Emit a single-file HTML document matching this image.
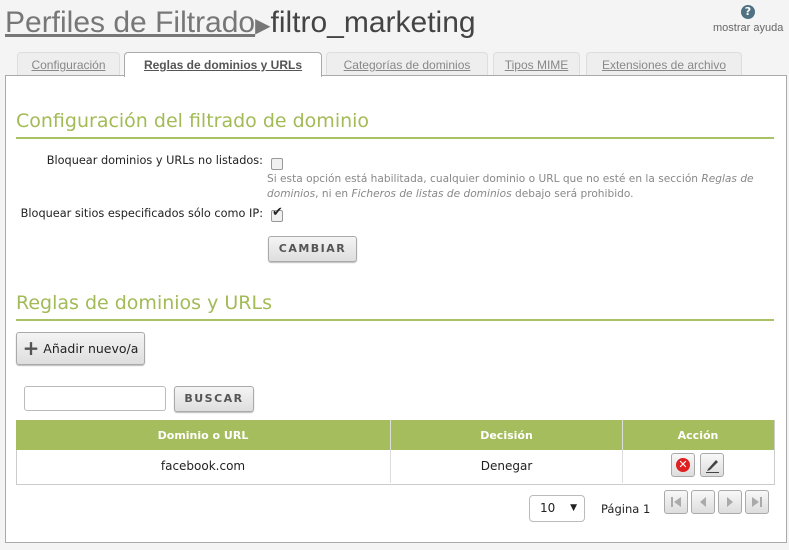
<!DOCTYPE html>
<html><head><meta charset="utf-8"><style>
body{margin:0;width:789px;height:550px;background:#f4f4f4;font-family:"DejaVu Sans",Verdana,sans-serif;position:relative;overflow:hidden;color:#222}
.a{position:absolute}
.title{left:5px;top:6px;font-family:"Liberation Sans",sans-serif;font-size:30px;color:#777;white-space:nowrap;transform:scaleX(1.0);transform-origin:left top}
.title u{color:#777}
.title b{color:#444;font-weight:normal}
.tab{top:52px;height:22px;border:1px solid #ddd;border-bottom:none;border-radius:4px 4px 0 0;background:#eeeeee;font-family:"Liberation Sans",sans-serif;font-size:12px;color:#888;text-align:center;line-height:24px;white-space:nowrap}
.tab span{text-decoration:underline}
.panel{left:5px;top:75px;width:780px;height:466px;background:#fff;border:1px solid #aaa}
.h{color:#a2bb57;font-size:19px;left:16px}
.line{left:16px;width:758px;height:2px;background:#a9c265}
.lbl{font-size:11.3px;text-align:right;white-space:nowrap}
.btn{background:linear-gradient(#f4f4f4,#dedede);border:1px solid #aaa;border-radius:3px;box-shadow:0 1px 1px #bbb;font-size:11px;font-weight:bold;letter-spacing:1.5px;color:#555;text-align:center}
.cb{width:10px;height:10px;border:1px solid #999;border-radius:2px;background:#f0f0f0}
.sm{width:22px;height:22px;border:1px solid #aaa;border-radius:3px;background:linear-gradient(#f8f8f8,#ddd)}
</style></head><body>
<div class="a title"><u>Perfiles de Filtrado</u><span style="color:#777;font-size:20px">▶</span><b>filtro_marketing</b></div>
<div class="a" style="left:741px;top:5px;width:14px;height:14px;border-radius:50%;background:#4f7184;color:#fff;font-size:11px;font-weight:bold;text-align:center;line-height:14px">?</div>
<div class="a" style="left:713px;top:22px;font-family:'Liberation Sans',sans-serif;font-size:11px;color:#666">mostrar ayuda</div>
<div class="a panel"></div>
<div class="a tab" style="left:17px;width:101px"><span>Configuración</span></div>
<div class="a tab" style="left:124px;width:196px;height:24px;background:#fff;border-color:#aaa;color:#555;font-weight:bold"><span>Reglas de dominios y URLs</span></div>
<div class="a tab" style="left:326px;width:160px"><span>Categorías de dominios</span></div>
<div class="a tab" style="left:493px;width:85px"><span>Tipos MIME</span></div>
<div class="a tab" style="left:586px;width:154px"><span>Extensiones de archivo</span></div>

<div class="a h" style="top:110px">Configuración del filtrado de dominio</div>
<div class="a line" style="top:137px"></div>
<div class="a lbl" style="left:20px;width:243px;top:154px">Bloquear dominios y URLs no listados:</div>
<div class="a cb" style="left:271px;top:158px"></div>
<div class="a" style="left:267px;top:172px;width:510px;font-size:10.6px;color:#888;line-height:15px">Si esta opción está habilitada, cualquier dominio o URL que no esté en la sección <i>Reglas de dominios</i>, ni en <i>Ficheros de listas de dominios</i> debajo será prohibido.</div>
<div class="a lbl" style="left:0px;width:263px;top:207px">Bloquear sitios especificados sólo como IP:</div>
<div class="a cb" style="left:271px;top:210px"></div>
<div class="a" style="left:272px;top:205px;font-size:13px;color:#222">✔</div>
<div class="a btn" style="left:268px;top:236px;width:87px;height:24px;line-height:24px">CAMBIAR</div>

<div class="a h" style="top:292px">Reglas de dominios y URLs</div>
<div class="a line" style="top:319px"></div>
<div class="a btn" style="left:16px;top:332px;width:127px;height:31px;line-height:31px;font-weight:normal;letter-spacing:0;font-size:12.5px;color:#222"><span style="font-size:20px;color:#555;vertical-align:-2px;font-weight:bold">+</span> Añadir nuevo/a</div>
<div class="a" style="left:24px;top:386px;width:140px;height:23px;border:1px solid #bbb;border-radius:3px;background:#fff"></div>
<div class="a btn" style="left:174px;top:386px;width:78px;height:24px;line-height:24px">BUSCAR</div>

<div class="a" style="left:16px;top:420px;width:757px;height:63px;border:1px solid #ccc;background:#fff"></div>
<div class="a" style="left:16px;top:420px;width:758px;height:30px;background:#a5bd5c"></div>
<div class="a" style="left:390px;top:420px;width:1px;height:63px;background:#ddd"></div>
<div class="a" style="left:622px;top:420px;width:1px;height:63px;background:#ddd"></div>
<div class="a" style="left:16px;top:429px;width:374px;text-align:center;color:#fff;font-weight:bold;font-size:11px">Dominio o URL</div>
<div class="a" style="left:391px;top:429px;width:231px;text-align:center;color:#fff;font-weight:bold;font-size:11px">Decisión</div>
<div class="a" style="left:623px;top:429px;width:150px;text-align:center;color:#fff;font-weight:bold;font-size:11px">Acción</div>
<div class="a" style="left:16px;top:459px;width:374px;text-align:center;font-size:12px">facebook.com</div>
<div class="a" style="left:391px;top:459px;width:231px;text-align:center;font-size:12px">Denegar</div>
<div class="a sm" style="left:671px;top:453px"><div class="a" style="left:4px;top:4px;width:14px;height:14px;border-radius:50%;background:#e02020;color:#fff;font-size:11px;font-weight:bold;text-align:center;line-height:14px">✕</div></div>
<div class="a sm" style="left:700px;top:453px"><svg class="a" style="left:3px;top:3px" width="16" height="16"><path d="M4 12 L12 3 L14 5 L6 13 L3 14Z" fill="#444"/><rect x="2" y="15" width="13" height="1" fill="#444"/></svg></div>

<div class="a" style="left:529px;top:495px;width:54px;height:25px;border:1px solid #bbb;border-radius:4px;background:#fff;font-size:12px;line-height:25px"><span style="margin-left:10px">10</span><span style="position:absolute;right:7px;font-size:9px">▼</span></div>
<div class="a" style="left:601px;top:502px;font-size:11.5px">Página 1</div>
<div class="a sm" style="left:664px;top:490px"><svg class="a" style="left:5px;top:5px" width="12" height="12"><rect x="1" y="1" width="2" height="10" fill="#aaa"/><path d="M11 1 L4 6 L11 11Z" fill="#aaa"/></svg></div>
<div class="a sm" style="left:691px;top:490px"><svg class="a" style="left:5px;top:5px" width="12" height="12"><path d="M9 1 L3 6 L9 11Z" fill="#aaa"/></svg></div>
<div class="a sm" style="left:718px;top:490px"><svg class="a" style="left:5px;top:5px" width="12" height="12"><path d="M3 1 L9 6 L3 11Z" fill="#aaa"/></svg></div>
<div class="a sm" style="left:745px;top:490px"><svg class="a" style="left:5px;top:5px" width="12" height="12"><path d="M1 1 L8 6 L1 11Z" fill="#aaa"/><rect x="9" y="1" width="2" height="10" fill="#aaa"/></svg></div>
</body></html>
